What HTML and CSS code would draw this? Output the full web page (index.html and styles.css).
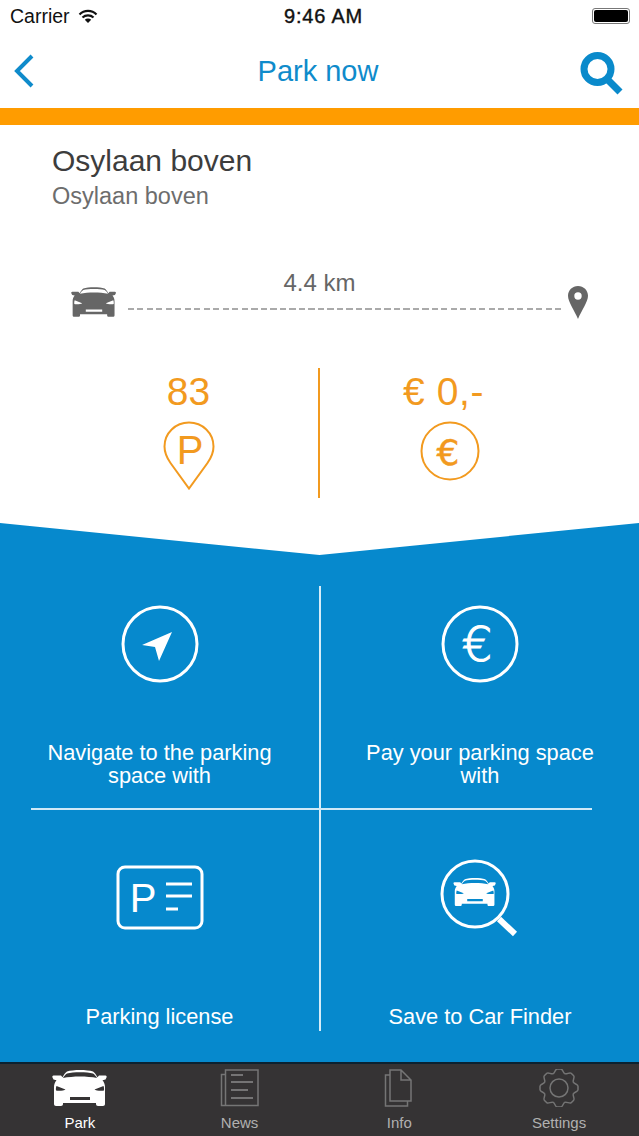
FILE: index.html
```html
<!DOCTYPE html>
<html lang="en">
  <head>
    <meta charset="utf-8" />
    <meta name="viewport" content="width=device-width, initial-scale=1" />
    <title>Park now</title>
    <link rel="stylesheet" href="styles.css">
  </head>
  <body>
    <!-- shared icons -->
    <svg class="defs" width="0" height="0">
      <symbol id="car" viewBox="0 0 56 36">
        <path fill-rule="evenodd" d="M15 1.500C18 .5 23 0 28 0s10 .5 13 1.500c1.500 1 3.200 3.300 4.500 5.700L47 5.500h6.500c1 0 1.500 1 1 2l-1 2-3 .7c1.600 1.800 2.500 4.300 2.500 6.800V34c0 1.200-.8 2-2 2h-5c-1.200 0-2-.8-2-2v-1H11v1c0 1.200-.8 2-2 2H4c-1.200 0-2-.8-2-2V17c0-2.500.9-5 2.500-6.800l-3-.7-1-2c-.5-1 0-2 1-2H9l1.500 1.700C11.800 4.800 13.500 2.500 15 1.500zM15 3.500c-1.500 1-3 2.500-4 4.500 5-1 11-1.500 17-1.500s12 .5 17 1.500c-1-2-2.500-3.500-4-4.500-3-.8-8-1.300-13-1.300s-10 .5-13 1.300zM4.500 16l9 3.500c-1 1.200-7 1.500-9.500 1-.2-1.500-.1-3.200.5-4.500zM51.500 16l-9 3.500c1 1.200 7 1.500 9.500 1 .2-1.500.1-3.200-.5-4.500zM18 27h20v3H18z" />
      </symbol>
      <path id="gear-tooth" d="M-5.930-14.320C-4-15-3.800-19-1.800-19L1.800-19C3.800-19 4-15 5.930-14.320" />
    </svg>

    <div class="status-bar">
      <div class="status-left">
        <span>Carrier</span>
        <svg class="wifi" width="20" height="15" viewBox="0 0 20 15">
          <path d="M1.500 5.500a12 12 0 0 1 17 0M4.500 8.500a8 8 0 0 1 11 0" />
          <path class="wifi-dot" d="M10 14L6.800 10.800a4.600 4.600 0 0 1 6.400 0z" />
        </svg>
      </div>
      <span class="status-time">9:46 AM</span>
      <div class="battery"><div class="battery-fill"></div></div>
    </div>

    <header class="nav-bar">
      <svg class="nav-back" width="24" height="36" viewBox="0 0 24 36">
        <path d="M20 3L5 18l15 15" />
      </svg>
      <h1>Park now</h1>
      <svg class="nav-search" width="44" height="44" viewBox="0 0 44 44">
        <circle cx="17.500" cy="18" r="13.500" />
        <path d="M27 28l13 13" />
      </svg>
    </header>
    <div class="orange-bar"></div>

    <main class="details">
      <h2>Osylaan boven</h2>
      <p class="sub-name">Osylaan boven</p>

      <div class="route">
        <svg class="route-car" width="46" height="30"><use href="#car" /></svg>
        <div class="route-mid">
          <span class="route-km">4.4 km</span>
          <div class="route-line"></div>
        </div>
        <svg class="route-pin" width="20" height="33" viewBox="0 0 20 33">
          <path fill-rule="evenodd" d="M10 0c5.600 0 10 4.300 10 9.800 0 6-6.500 15-10 23.200C6.500 24.800 0 15.800 0 9.800 0 4.300 4.400 0 10 0zm0 6.300a3.700 3.700 0 1 0 0 7.400 3.700 3.700 0 0 0 0-7.400z" />
        </svg>
      </div>

      <div class="stats">
        <div class="stat">
          <span class="stat-value">83</span>
          <svg class="stat-icon" width="52" height="70" viewBox="0 0 52 70">
            <path d="M26 1.500c13.500 0 24.500 10.500 24.500 24 0 6.500-2.500 11.500-6 16.500L26 67.500 7.500 42c-3.500-5-6-10-6-16.500 0-13.500 11-24 24.500-24z" />
            <text x="27" y="43" text-anchor="middle">P</text>
          </svg>
        </div>
        <div class="stat stat-price">
          <span class="stat-value">€ 0,-</span>
          <svg class="stat-icon stat-euro" width="60" height="60" viewBox="0 0 60 60">
            <circle cx="30" cy="30" r="28.500" />
            <text x="28" y="44" text-anchor="middle">€</text>
          </svg>
        </div>
      </div>
    </main>

    <section class="actions">
      <div class="action-row row-top">
        <div class="action">
          <svg class="action-icon" width="78" height="78" viewBox="0 0 78 78">
            <circle cx="39" cy="39" r="37" />
            <path class="solid" d="M51 27L21 40l13 2 4 14z" />
          </svg>
          <p>Navigate to the parking space with</p>
        </div>
        <div class="action">
          <svg class="action-icon" width="78" height="78" viewBox="0 0 78 78">
            <circle cx="39" cy="39" r="37" />
            <text x="36" y="56" text-anchor="middle">€</text>
          </svg>
          <p>Pay your parking space with</p>
        </div>
      </div>
      <div class="action-divider"></div>
      <div class="action-row row-bottom">
        <div class="action">
          <svg class="action-icon icon-license" width="88" height="66" viewBox="0 0 88 66">
            <rect x="2" y="2" width="84" height="61" rx="7" />
            <text x="27" y="47" text-anchor="middle">P</text>
            <path d="M50 19h26M50 31h26M50 44h12" />
          </svg>
          <p>Parking license</p>
        </div>
        <div class="action">
          <svg class="action-icon icon-finder" width="80" height="78" viewBox="0 0 80 78">
            <circle cx="35" cy="35" r="33" />
            <path class="thick" d="M59 60l16 15" />
            <use class="white-car" href="#car" x="13" y="19" width="44" height="28" />
          </svg>
          <p>Save to Car Finder</p>
        </div>
      </div>
    </section>

    <nav class="tab-bar">
      <div class="tab tab-active">
        <svg width="56" height="38"><use href="#car" /></svg>
        <span>Park</span>
      </div>
      <div class="tab">
        <svg width="40" height="38" viewBox="0 0 40 38">
          <path d="M5.500 1H38v35.500H5.500zM5.500 5.500h-4v31h4" />
          <path class="tab-lines" d="M11 6h12M11 13h22M11 21h17M11 29h22" />
        </svg>
        <span>News</span>
      </div>
      <div class="tab">
        <svg width="30" height="38" viewBox="0 0 30 38">
          <path d="M6 1h11l10 10v21H6zM17 1v10h10M6 6H1.500v31h22v-5" />
        </svg>
        <span>Info</span>
      </div>
      <div class="tab">
        <svg width="40" height="38" viewBox="-20 -19 40 38">
          <circle r="9" />
          <use href="#gear-tooth" />
          <use href="#gear-tooth" transform="rotate(45)" />
          <use href="#gear-tooth" transform="rotate(90)" />
          <use href="#gear-tooth" transform="rotate(135)" />
          <use href="#gear-tooth" transform="rotate(180)" />
          <use href="#gear-tooth" transform="rotate(225)" />
          <use href="#gear-tooth" transform="rotate(270)" />
          <use href="#gear-tooth" transform="rotate(315)" />
        </svg>
        <span>Settings</span>
      </div>
    </nav>
  </body>
</html>
```

FILE: styles.css
```css
* {
  box-sizing: border-box;
}

html,
body {
  margin: 0;
  padding: 0;
}

body {
  width: 639px;
  height: 1136px;
  overflow: hidden;
  background: #fff;
  font-family: "Liberation Sans", Arial, sans-serif;
  color: #666;
}

h1,
h2,
p {
  margin: 0;
  font-weight: normal;
}

svg {
  display: block;
}

.defs {
  position: absolute;
}

/* status bar */
.status-bar {
  height: 32px;
  padding: 0 8px 0 10px;
  display: grid;
  grid-template-columns: 1fr auto 1fr;
  align-items: center;
  color: #111;
}

.status-left {
  display: flex;
  align-items: center;
  gap: 8px;
  font-size: 19.500px;
}

.wifi {
  fill: none;
  stroke: #111;
  stroke-width: 2.200;
}

.wifi-dot {
  fill: #111;
  stroke: none;
}

.status-time {
  margin-left: 6px;
  font-size: 20px;
  -webkit-text-stroke: 0.4px #111;
  letter-spacing: 0.8px;
}

.battery {
  justify-self: end;
  width: 38px;
  height: 16px;
  padding: 1px;
  border: 1px solid #777;
  border-radius: 3px;
  margin-right: 1px;
}

.battery-fill {
  height: 100%;
  background: #000;
  border-radius: 2px;
}

/* nav */
.nav-bar {
  height: 76px;
  padding: 0 15px 0 12px;
  display: grid;
  grid-template-columns: 1fr auto 1fr;
  align-items: center;
}

.nav-bar h1 {
  font-size: 29px;
  color: #0f8bcb;
  margin-top: 3px;
}

.nav-back {
  fill: none;
  stroke: #0f8bcb;
  stroke-width: 4;
  margin-top: 2px;
}

.nav-search {
  justify-self: end;
  fill: none;
  stroke: #0a8acb;
  stroke-width: 7;
  margin-top: 6px;
}

.orange-bar {
  height: 17px;
  background: #ff9c00;
}

/* parking details */
.details {
  height: 398px;
  padding-top: 19px;
}

.details h2 {
  padding-left: 52px;
  font-size: 30px;
  line-height: 34px;
  color: #3d3d3d;
}

.sub-name {
  padding-left: 52px;
  margin-top: 4px;
  font-size: 23.500px;
  line-height: 28px;
  color: #6d6d6d;
}

.route {
  margin-top: 59px;
  padding: 0 51px 0 71px;
  display: flex;
  align-items: flex-end;
  gap: 5px;
}

.route-car {
  fill: #666;
  margin-right: 6px;
  margin-bottom: 2px;
}

.route-mid {
  flex: 1;
  text-align: center;
  font-size: 24px;
  line-height: 28px;
  color: #666;
  padding-bottom: 9px;
}

.route-km {
  display: block;
  margin-right: 52px;
}

.route-line {
  height: 2px;
  margin-top: 11px;
  background: repeating-linear-gradient(to right, #aaa 0, #aaa 6px, transparent 6px, transparent 9.500px);
}

.route-pin {
  fill: #666;
}

.stats {
  margin-top: 49px;
  padding: 0 60px 0 59px;
  display: flex;
}

.stat {
  flex: 1;
  height: 130px;
  display: flex;
  flex-direction: column;
  align-items: center;
  color: #f29a1f;
}

.stat + .stat {
  border-left: 2px solid #f29a1f;
}

.stat-value {
  margin-top: 2px;
  font-size: 39px;
  line-height: 44px;
}

.stat-price .stat-value {
  margin-right: 12px;
  letter-spacing: 0.6px;
}

.stat-icon {
  margin-top: 7px;
  fill: none;
  stroke: #f29a1f;
  stroke-width: 2;
}

.stat-icon text {
  fill: #f29a1f;
  stroke: none;
  font-size: 40px;
}

.stat-euro text {
  font-family: "DejaVu Sans", sans-serif;
  font-size: 36px;
  stroke: #f29a1f;
  stroke-width: 0.5;
}

/* blue actions panel */
.actions {
  height: 539px;
  padding-top: 63px;
  background: #0689cd;
  color: #fff;
  clip-path: polygon(0 0, 50% 32px, 100% 0, 100% 100%, 0 100%);
}

.action-row {
  display: flex;
}

.row-top {
  height: 222px;
}

.row-bottom {
  height: 221px;
}

.action {
  width: 321px;
  display: flex;
  flex-direction: column;
  align-items: center;
  text-align: center;
}

.action:first-child {
  border-right: 2px solid #d5ecf8;
}

.action + .action {
  width: 318px;
}

.action p {
  width: 250px;
  font-size: 21.800px;
  line-height: 23px;
}

.row-top .action {
  padding-top: 19px;
}

.row-top .action p {
  margin-top: 58px;
}

.row-bottom .action {
  padding-top: 55px;
}

.row-bottom .action p {
  margin-top: auto;
  margin-bottom: 3px;
}

.action-icon {
  flex: none;
  fill: none;
  stroke: #fff;
  stroke-width: 3;
}

.action-icon text {
  fill: #fff;
  stroke: #fff;
  stroke-width: 1.200;
  font-family: "DejaVu Sans", sans-serif;
  font-weight: 200;
  font-size: 48px;
}

.icon-license text {
  stroke: none;
  font-family: "Liberation Sans", Arial, sans-serif;
  font-weight: normal;
  font-size: 40px;
}

.icon-finder {
  margin-top: -6px;
}

.action-icon .solid {
  fill: #fff;
  stroke: none;
}

.action-icon .thick {
  stroke-width: 6;
}

.white-car {
  fill: #fff;
  stroke: none;
}

.action-divider {
  height: 2px;
  margin: 0 47px 0 31px;
  background: #cfe9f7;
}

/* bottom tabs */
.tab-bar {
  height: 74px;
  padding-top: 5px;
  background: #353334;
  border-top: 2px solid #0b2231;
  display: flex;
}

.tab {
  width: 160px;
  display: flex;
  flex-direction: column;
  align-items: center;
  color: #b0b0b0;
  font-size: 15px;
  line-height: 18px;
}

.tab svg {
  margin-bottom: 7px;
  fill: none;
  stroke: #757575;
  stroke-width: 1.500;
}

.tab-lines {
  stroke: #8a8a8a;
}

.tab-active {
  color: #fff;
}

.tab-active svg {
  fill: #fff;
  stroke: none;
}
```
